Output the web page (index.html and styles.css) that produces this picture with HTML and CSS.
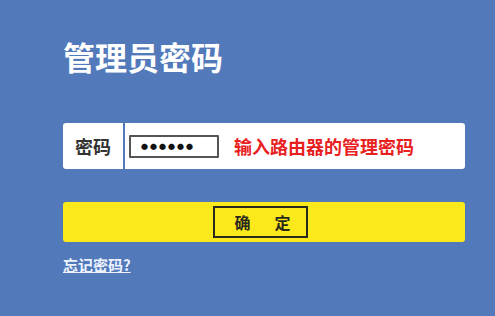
FILE: index.html
```html
<!DOCTYPE html>
<html lang="zh-CN">
<head>
  <meta charset="UTF-8" />
  <meta name="viewport" content="width=device-width, initial-scale=1.0" />
  <title>管理员密码</title>
  <link rel="stylesheet" href="styles.css">
</head>
<body>
  <div class="container">
    <h1>管理员密码</h1>

    <div class="pwd-row">
      <div class="pwd-label">密码</div>
      <div class="pwd-field">
        <div class="pwd-box">●●●●●●</div>
        <span class="pwd-hint">输入路由器的管理密码</span>
      </div>
    </div>

    <div class="confirm-bar">
      <button class="confirm-btn"><span>确</span><span>定</span></button>
    </div>

    <a class="forgot" href="#">忘记密码?</a>
  </div>
</body>
</html>
```

FILE: styles.css
```css
* {
  box-sizing: border-box;
}
html, body {
  height: 100%;
}
body {
  margin: 0;
  background-color: #527abb;
  font-family: "Noto Sans CJK SC", "Noto Sans", sans-serif;
}
.container {
  padding: 38px 30px 0 63px;
}
h1 {
  margin: 0;
  color: #fff;
  font-size: 32px;
  font-weight: bold;
  line-height: 36px;
}
.pwd-row {
  display: flex;
  gap: 2px;
  width: 402px;
  height: 46px;
  margin-top: 49px;
}
.pwd-label {
  width: 60px;
  background: #fff;
  border-radius: 3px 0 0 3px;
  display: flex;
  align-items: center;
  justify-content: center;
  color: #333;
  font-size: 18px;
  font-weight: bold;
}
.pwd-field {
  flex: 1;
  background: #fff;
  border-radius: 0 3px 3px 0;
  display: flex;
  align-items: center;
  padding-left: 4px;
}
.pwd-box {
  width: 90px;
  height: 23px;
  border: 2px solid #555;
  border-radius: 1px;
  font-size: 7px;
  line-height: 19px;
  padding-left: 10px;
  letter-spacing: 2px;
  color: #111;
}
.pwd-hint {
  margin-left: 15px;
  color: #e8201e;
  font-size: 18px;
  font-weight: bold;
}
.confirm-bar {
  width: 402px;
  height: 40px;
  margin-top: 33px;
  background: #fbe91b;
  border-radius: 3px;
  display: flex;
  justify-content: center;
  align-items: center;
  padding-right: 7px;
}
.confirm-btn {
  width: 95px;
  height: 32px;
  background: transparent;
  border: 2px solid #2a2a1c;
  font-family: inherit;
  font-size: 16px;
  font-weight: bold;
  color: #2a2a1c;
  padding: 0 0 0 4px;
  display: flex;
  justify-content: center;
  align-items: center;
  gap: 24px;
  cursor: pointer;
}
.forgot {
  display: inline-block;
  margin-top: 15px;
  color: #eef2ff;
  font-size: 15px;
  font-weight: bold;
  line-height: 16px;
}
```
